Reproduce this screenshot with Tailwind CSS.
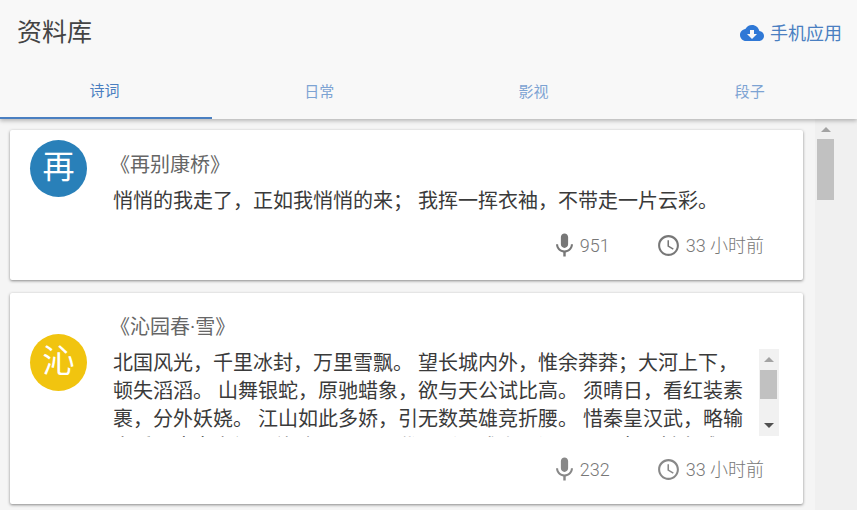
<!DOCTYPE html>
<html lang="zh">
<head>
    <meta charset="UTF-8">
    <title>资料库</title>
    <script src="https://cdn.jsdelivr.net/npm/@tailwindcss/browser@4"></script>
</head>
<body class="h-[510px] overflow-hidden bg-[#f5f5f5] font-['Roboto','Noto_Sans_CJK_SC',sans-serif]">

    <!-- header -->
    <header class="relative z-10 bg-[#f8f8f8] h-[119px] shadow-[0_2px_4px_rgba(0,0,0,0.25)]">
        <div class="h-[66px] flex items-center justify-between pl-[17px] pr-[15px]">
            <h1 class="text-[25px] text-[#444] font-normal">资料库</h1>
            <a class="flex items-center gap-[6px] text-[18px] text-[#4a7fc1]">
                <svg class="w-[24px] h-[24px] fill-[#2f78d6]" viewBox="0 0 24 24"><path d="M19.35 10.04C18.67 6.59 15.64 4 12 4 9.11 4 6.6 5.64 5.35 8.04 2.34 8.36 0 10.91 0 14c0 3.31 2.69 6 6 6h13c2.76 0 5-2.24 5-5 0-2.64-2.05-4.78-4.65-4.96zM17 13l-5 5-5-5h3V9h4v4h3z"/></svg>
                手机应用
            </a>
        </div>
        <nav class="grid grid-cols-4 h-[53px] text-[15px] text-[#7da3d3]">
            <div class="flex items-center justify-center w-[212px] pr-[3px] text-[#4a7fc1] border-b-2 border-[#4a7fc1]">诗词</div>
            <div class="flex items-center justify-center pr-[4px]">日常</div>
            <div class="flex items-center justify-center pr-[4px]">影视</div>
            <div class="flex items-center justify-center">段子</div>
        </nav>
    </header>

    <div class="flex h-[391px]">
        <main class="w-[815px] pt-[11px] pl-[10px] pr-[12px] flex flex-col gap-[13px] overflow-hidden">

            <!-- 再别康桥 -->
            <article class="h-[150px] shrink-0 bg-white rounded-[2px] shadow-[0_1px_3px_rgba(0,0,0,0.45)] flex flex-col">
                <div class="flex">
                    <div class="w-[57px] h-[57px] mt-[10px] ml-[20px] rounded-full bg-[#2980b9] text-white text-[32px] leading-none pb-[3px] flex items-center justify-center">再</div>
                    <div class="ml-[26px] pt-[21px]">
                        <h2 class="text-[20px] leading-[28px] font-normal text-[#666] -ml-[3px]">《再别康桥》</h2>
                        <p class="mt-[8px] text-[20px] leading-[28px] text-[#3a3a3a] whitespace-nowrap">悄悄的我走了，正如我悄悄的来； 我挥一挥衣袖，不带走一片云彩。</p>
                    </div>
                </div>
                <div class="mt-[16px] flex justify-end items-center gap-[46px] pr-[39px] text-[18px] leading-[28px] font-light text-[#777]">
                    <span class="flex items-center gap-[1px]">
                        <svg class="w-[29px] h-[29px] fill-[#777]" viewBox="0 0 24 24"><path d="M12 14c1.66 0 2.99-1.34 2.99-3L15 5c0-1.66-1.34-3-3-3S9 3.34 9 5v6c0 1.66 1.34 3 3 3zm5.3-3c0 3-2.54 5.1-5.3 5.1S6.7 14 6.7 11H5c0 3.41 2.72 6.23 6 6.72V21h2v-3.28c3.28-.48 6-3.3 6-6.72h-1.7z"/></svg>
                        951
                    </span>
                    <span class="flex items-center gap-[5px]">
                        <svg class="w-[25px] h-[25px] fill-[#777]" viewBox="0 0 24 24"><path d="M11.99 2C6.47 2 2 6.48 2 12s4.47 10 9.99 10C17.52 22 22 17.52 22 12S17.52 2 11.99 2zM12 20c-4.42 0-8-3.58-8-8s3.58-8 8-8 8 3.58 8 8-3.58 8-8 8zm.5-13H11v6l5.25 3.15.75-1.23-4.5-2.67z"/></svg>
                        33 小时前
                    </span>
                </div>
            </article>

            <!-- 沁园春·雪 -->
            <article class="h-[211px] shrink-0 bg-white rounded-[2px] shadow-[0_1px_3px_rgba(0,0,0,0.45)] flex flex-col">
                <div class="flex">
                    <div class="w-[57px] h-[57px] mt-[41px] ml-[20px] shrink-0 rounded-full bg-[#f1c40f] text-white text-[32px] leading-none pb-[3px] flex items-center justify-center">沁</div>
                    <div class="ml-[26px] pt-[20px]">
                        <h2 class="text-[20px] leading-[28px] font-normal text-[#666] -ml-[3px]">《沁园春·雪》</h2>
                        <div class="mt-[8px] flex h-[87px]">
                            <p class="w-[646px] h-[88px] overflow-hidden text-[20px] leading-[28px] text-[#3a3a3a] whitespace-nowrap">
                                北国风光，千里冰封，万里雪飘。 望长城内外，惟余莽莽；大河上下，<br>
                                顿失滔滔。 山舞银蛇，原驰蜡象，欲与天公试比高。 须晴日，看红装素<br>
                                裹，分外妖娆。 江山如此多娇，引无数英雄竞折腰。 惜秦皇汉武，略输<br>
                                文采；唐宗宋祖，稍逊风骚。 一代天骄，成吉思汗，只识弯弓射大雕。
                            </p>
                            <!-- inner scrollbar -->
                            <div class="w-[20px] bg-[#f1f1f1] flex flex-col items-center pl-px pr-[2px]">
                                <div class="h-[21px] flex items-center justify-center"><div class="w-0 h-0 border-x-[5px] border-x-transparent border-b-[5px] border-b-[#a3a3a3]"></div></div>
                                <div class="w-full h-[29px] bg-[#c1c1c1]"></div>
                                <div class="mt-auto h-[21px] flex items-center justify-center"><div class="w-0 h-0 border-x-[5px] border-x-transparent border-t-[5px] border-t-[#505050]"></div></div>
                            </div>
                        </div>
                    </div>
                </div>
                <div class="mt-[19px] flex justify-end items-center gap-[46px] pr-[39px] text-[18px] leading-[28px] font-light text-[#777]">
                    <span class="flex items-center gap-[1px]">
                        <svg class="w-[29px] h-[29px] fill-[#888]" viewBox="0 0 24 24"><path d="M12 14c1.66 0 2.99-1.34 2.99-3L15 5c0-1.66-1.34-3-3-3S9 3.34 9 5v6c0 1.66 1.34 3 3 3zm5.3-3c0 3-2.54 5.1-5.3 5.1S6.7 14 6.7 11H5c0 3.41 2.72 6.23 6 6.72V21h2v-3.28c3.28-.48 6-3.3 6-6.72h-1.7z"/></svg>
                        232
                    </span>
                    <span class="flex items-center gap-[5px]">
                        <svg class="w-[25px] h-[25px] fill-[#888]" viewBox="0 0 24 24"><path d="M11.99 2C6.47 2 2 6.48 2 12s4.47 10 9.99 10C17.52 22 22 17.52 22 12S17.52 2 11.99 2zM12 20c-4.42 0-8-3.58-8-8s3.58-8 8-8 8 3.58 8 8-3.58 8-8 8zm.5-13H11v6l5.25 3.15.75-1.23-4.5-2.67z"/></svg>
                        33 小时前
                    </span>
                </div>
            </article>
        </main>

        <!-- page scrollbar -->
        <div class="flex-1 bg-[#f0f0f0] pl-[2px]">
            <div class="w-[17px] h-[20px] flex items-center justify-center"><div class="w-0 h-0 border-x-[5px] border-x-transparent border-b-[5px] border-b-[#a3a3a3]"></div></div>
            <div class="w-[17px] h-[61px] bg-[#c1c1c1]"></div>
        </div>
    </div>

</body>
</html>
